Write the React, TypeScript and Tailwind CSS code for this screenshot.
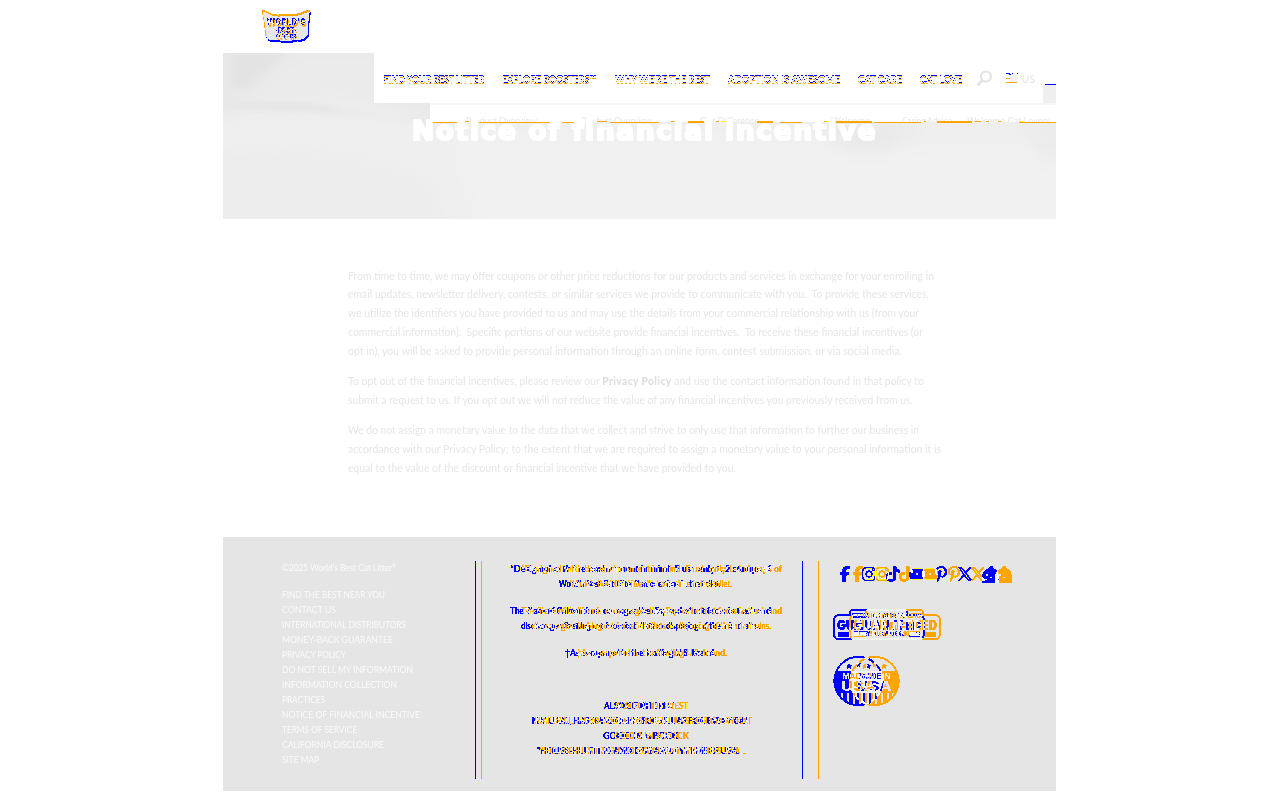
import React, { useLayoutEffect, useRef } from "react";
import { FaFacebookF, FaInstagram, FaTiktok, FaYoutube, FaPinterestP, FaXTwitter } from "react-icons/fa6";

/** One line of text, stretched or squeezed to a known width. */
function Fit({ w, children, className = "" }: { w: number; children: React.ReactNode; className?: string }) {
  const inner = useRef<HTMLSpanElement>(null);
  useLayoutEffect(() => {
    const el = inner.current;
    if (el && el.offsetWidth) el.style.transform = `scaleX(${w / el.getBoundingClientRect().width})`;
  }, [w]);
  return (
    <span className={`block whitespace-pre ${className}`} style={{ width: w }}>
      <span ref={inner} className="inline-block origin-left whitespace-pre">{children}</span>
    </span>
  );
}

/** Splits a shape into a first copy, a shifted copy and their overlap. */
function Split({ id, dx, dy, same, fringe = true }: { id: string; dx: number; dy: number; same: string; fringe?: boolean }) {
  return (
    <filter id={id} x="-60%" y="-60%" width="260%" height="220%" colorInterpolationFilters="sRGB">
      <feComponentTransfer in="SourceAlpha" result="a"><feFuncA type="discrete" tableValues="0 0 0 1 1 1 1 1 1 1" /></feComponentTransfer>
      <feComponentTransfer in="SourceAlpha" result="f"><feFuncA type="discrete" tableValues={fringe ? "0 0 1 0 0 0 0 0 0 0" : "0 0"} /></feComponentTransfer>
      <feOffset in="a" dx={dx} dy={dy} result="b" />
      <feOffset in="f" dx={dx} dy={dy} result="g" />
      <feFlood floodColor="#0000ff" result="blue" />
      <feFlood floodColor="#ffa500" result="orange" />
      <feFlood floodColor="#ffff00" result="yellow" />
      <feFlood floodColor={same} result="pale" />
      <feComposite in="blue" in2="a" operator="in" result="b1" />
      <feComposite in="b1" in2="b" operator="out" result="onlyA" />
      <feComposite in="orange" in2="b" operator="in" result="o1" />
      <feComposite in="o1" in2="a" operator="out" result="onlyB" />
      <feComposite in="a" in2="b" operator="in" result="ab" />
      <feComposite in="pale" in2="ab" operator="in" result="both" />
      <feComposite in="yellow" in2="f" operator="in" result="edgeA" />
      <feComposite in="yellow" in2="g" operator="in" result="edgeB" />
      <feMerge>
        <feMergeNode in="edgeA" />
        <feMergeNode in="edgeB" />
        <feMergeNode in="both" />
        <feMergeNode in="onlyB" />
        <feMergeNode in="onlyA" />
      </feMerge>
    </filter>
  );
}

const paragraphs: [number, React.ReactNode][][] = [
  [
    [586, "From time to time, we may offer coupons or other price reductions for our products and services in exchange for your enrolling in"],
    [581, "email updates, newsletter delivery, contests, or similar services we provide to communicate with you.  To provide these services,"],
    [571, "we utilize the identifiers you have provided to us and may use the details from your commercial relationship with us (from your"],
    [575, "commercial information).  Specific portions of our website provide financial incentives.  To receive these financial incentives (or"],
    [554, "opt in), you will be asked to provide personal information through an online form, contest submission, or via social media."],
  ],
  [
    [576, <>To opt out of the financial incentives, please review our <b className="text-[12px] leading-none tracking-[0.5px] font-black text-[#dedede]">Privacy Policy</b> and use the contact information found in that policy to</>],
    [565, "submit a request to us. If you opt out we will not reduce the value of any financial incentives you previously received from us."],
  ],
  [
    [571, "We do not assign a monetary value to the data that we collect and strive to only use that information to further our business in"],
    [593, "accordance with our Privacy Policy; to the extent that we are required to assign a monetary value to your personal information it is"],
    [388, "equal to the value of the discount or financial incentive that we have provided to you."],
  ],
];

const links: [number, string][] = [
  [103, "FIND THE BEST NEAR YOU"],
  [54, "CONTACT US"],
  [124, "INTERNATIONAL DISTRIBUTORS"],
  [111, "MONEY-BACK GUARANTEE"],
  [64, "PRIVACY POLICY"],
  [131, "DO NOT SELL MY INFORMATION"],
  [115, "INFORMATION COLLECTION"],
  [43, "PRACTICES"],
  [138, "NOTICE OF FINANCIAL INCENTIVE"],
  [75, "TERMS OF SERVICE"],
  [102, "CALIFORNIA DISCLOSURE"],
  [37, "SITE MAP"],
];

const nav: [number, string][] = [
  [100, "FIND YOUR BEST LITTER"],
  [94, "EXPLORE BOOSTERS™"],
  [95, "WHY WE'RE THE BEST"],
  [112, "ADOPTION IS AWESOME"],
  [44, "CAT CARE"],
  [42, "CAT LOVE"],
];

const dashes: [number, number][] = [
  [432, 28], [465, 4], [479, 72], [562, 14], [597, 10], [610, 49], [671, 8], [688, 16], [716, 3], [726, 4],
  [757, 16], [780, 22], [824, 2], [831, 41], [874, 47], [924, 2], [937, 35], [975, 6], [986, 3], [998, 3], [1019, 37],
];

function Logo() {
  return (
    <svg width="52" height="36" viewBox="0 0 52 36" className="[filter:url(#split-logo)]">
      <mask id="logo-cut">
        <rect width="52" height="36" fill="white" />
        <g fill="black" stroke="black" strokeWidth="0.2" fontFamily="Inter, sans-serif" fontWeight="900" textAnchor="middle">
          <text x="26" y="17" fontSize="8.8" textLength="39" lengthAdjust="spacingAndGlyphs">WORLD'S</text>
          <text x="26" y="24.5" fontSize="8" textLength="22" lengthAdjust="spacingAndGlyphs">-BEST-</text>
          <text x="26" y="30" fontSize="5" textLength="20" lengthAdjust="spacingAndGlyphs">CAT LITTER</text>
        </g>
      </mask>
      <path mask="url(#logo-cut)" d="M1.5 2.5 Q2 1.5 6 3 Q12 7.5 20 6.5 H34 Q41 5.5 46 2.5 Q50.5 0.5 49.5 4 Q47.5 14 48 23 Q47.5 31 40 31.5 Q34 30.5 30 33 H22 Q17 30.5 12 32 Q5 31 5 24 Q4.5 12 1.5 2.5Z" />
    </svg>
  );
}

function Storefront() {
  return (
    <svg width="18" height="17" viewBox="0 0 18 17">
      <path fillRule="evenodd" d="M1 17V9L3.5 5L8 2L9 0.5H12V2L16 4.5L17.5 9V17ZM5 8V10H7V8ZM9 11V12.5H11V11ZM4 13V14.5H6V13Z" />
    </svg>
  );
}

function Guarantee() {
  return (
    <svg width="94" height="32" viewBox="0 0 94 32" className="[filter:url(#split-badge)]">
      <path d="M17 6 V4 Q17 1 20 1 H71 Q74 1 74 4 V6 H85 Q91 6 91 12 V25 Q91 30.3 85 30.3 H7 Q1 30.3 1 25 V12 Q1 6 7 6Z" fill="none" stroke="black" strokeWidth="1.4" />
      <g fontFamily="Inter, sans-serif" fontWeight="800" textAnchor="middle">
        <text x="46" y="9" fontSize="6" textLength="54" lengthAdjust="spacingAndGlyphs">WORLD'S BEST CAT LITTER</text>
        <text x="46" y="21" fontSize="12.5" fontWeight="900" textLength="84" lengthAdjust="spacingAndGlyphs">GUARANTEED</text>
        <text x="46" y="27" fontSize="5.5" textLength="50" lengthAdjust="spacingAndGlyphs">MONEY-BACK PROMISE</text>
      </g>
      <path d="M5 23h12v4.5H5zM76 23h11v4.5H76z" />
    </svg>
  );
}

function MadeInUsa() {
  return (
    <svg width="52" height="52" viewBox="0 0 52 52" className="[filter:url(#split-badge)]">
      <mask id="usa-cut">
        <rect width="52" height="52" fill="white" />
        <g fill="black" fontFamily="Inter, sans-serif" fontWeight="900" textAnchor="middle">
          <text x="25.5" y="24" fontSize="7" textLength="32" lengthAdjust="spacingAndGlyphs">MADE IN</text>
          <text x="25.5" y="36" fontSize="13" textLength="35" lengthAdjust="spacingAndGlyphs">USA</text>
        </g>
        <path d="M9 38v14M15 38v14M21 38v14M27 38v14M33 38v14M39 38v14M44 38v14" stroke="black" strokeWidth="2" />
      </mask>
      <circle cx="25.5" cy="26" r="24.2" fill="none" stroke="black" strokeWidth="1.6" />
      <path mask="url(#usa-cut)" d="M3 16.5H48Q53 37 38 47Q26 53 14 47Q-2 38 3 16.5Z" />
      <g fontSize="8" textAnchor="middle" fontFamily="DejaVu Sans, sans-serif">
        <text x="16" y="14">★</text><text x="25.5" y="12">★</text><text x="35" y="14">★</text>
      </g>
    </svg>
  );
}

export default function App() {
  return (
    <div className="h-[800px] w-[1280px] overflow-hidden bg-white font-['Lato','Open_Sans',sans-serif]">
      <svg width="0" height="0" className="absolute">
        <Split id="split-nav" dx={0} dy={1} same="#f3f3f3" fringe={false} />
        <Split id="split-logo" dx={-1} dy={-2} same="#e7e7e7" fringe={false} />
        <Split id="split-text" dx={11} dy={0} same="#f3f3f3" />
        <Split id="split-wide" dx={3} dy={0} same="#f3f3f3" />
        <Split id="split-social" dx={13} dy={0} same="#ffffff" />
        <Split id="split-badge" dx={16} dy={0} same="#f4f4f4" fringe={false} />
      </svg>

      <div className="mx-auto w-[834px] pr-px">
        <header className="h-[53px] pl-[38px] pt-[10px]"><Logo /></header>

        <section className="relative h-[166px] overflow-hidden bg-[#efefef]">
          <svg className="absolute inset-0" width="833" height="166" viewBox="0 0 833 166">
            <defs>
              <filter id="soft"><feGaussianBlur stdDeviation="8" /></filter>
              <filter id="softer"><feGaussianBlur stdDeviation="3" /></filter>
            </defs>
            <g filter="url(#soft)">
              <path d="M-20 -20H220V70Q120 30 -20 65Z" fill="#e8e8e8" />
              <path d="M80 0H160V45L0 62Z" fill="#ebebeb" />
              <path d="M-20 100Q120 90 205 130L225 186H-20Z" fill="#ededed" />
              <path d="M230 85H560L620 100L853 90V186H260Z" fill="#f1f1f1" />
              <path d="M590 70H700L660 98L630 98Z" fill="#e9e9e9" />
              <path d="M790 60H853V115L815 105Z" fill="#ececec" />
            </g>
            <path d="M0 52Q70 46 110 55T210 68V71Q140 62 95 59T0 56Z" fill="#e4e4e4" filter="url(#softer)" />
            <path d="M10 0H62L25 34H8Z" fill="#e3e3e3" filter="url(#softer)" />
          </svg>

          <div className="absolute right-0 top-0 h-[31px] w-[13px] bg-white" />
          <div className="absolute right-0 top-[31px] h-px w-[11px] bg-[#0000ff]" />
          <nav className="absolute left-[151px] top-0 flex h-[50px] w-[669px] items-start bg-white pl-[10px] pt-[18px]">
            <div className="flex gap-[18.3px] [filter:url(#split-nav)]">
              {nav.map(([w, t]) => (
                <Fit key={t} w={w} className="text-[11.5px] font-bold leading-[15px] text-black">{t}</Fit>
              ))}
            </div>
            <svg className="ml-[14px] mt-[-1px]" width="17" height="17" viewBox="0 0 17 17" fill="none" stroke="#e3e3e3" strokeWidth="2.2">
              <circle cx="10" cy="6.5" r="5" /><path d="M6.4 10.2L1.5 15.2" strokeWidth="3" />
            </svg>
            <svg className="ml-[13px] mt-[2px]" width="13" height="11" viewBox="0 0 13 11" shapeRendering="crispEdges">
              <path d="M4 1h8v8H4z" fill="#f2f2f2" />
              <path d="M0 0h4v1H0zM6 0h1v1H6zM11 0h1v1h-1zM3 1h2v1H3z" fill="#0000ff" />
              <path d="M0 5h4v1H0zM0 9h11v1H0z" fill="#ffa500" />
            </svg>
            <span className="ml-[2px] mt-px text-[10.5px] leading-[15px] text-[#e6e6e6]">US</span>
          </nav>
          <div className="absolute left-[207px] right-0 top-[50px] h-[19px] overflow-hidden border-t-2 border-[#f6f6f6] bg-white">
            <div className="flex pl-[36px] pt-[9px] text-[10px] leading-[13px] text-[#e6e6e6]">
              <Fit w={71}>Product Overview</Fit>
              <Fit w={71} className="ml-[44px]">Product Overview</Fit>
              <Fit w={59} className="ml-[48px]">Our Difference</Fit>
              <Fit w={39} className="ml-[72px]">Welcome</Fit>
              <Fit w={50} className="ml-[32px]">Caring Advice</Fit>
              <Fit w={83} className="ml-[15px]">Welcome Cat Lovers</Fit>
            </div>
          </div>
          <svg className="absolute left-0 top-[68px]" width="833" height="2" viewBox="223 0 833 2" shapeRendering="crispEdges">
            {dashes.map(([x, w], i) => (
              <rect key={x} x={x} y={i % 3 === 1 ? 0 : w > 12 ? 0.5 : 0} width={w} height={w > 12 ? 1.5 : 1} fill="#ffa500" />
            ))}
            <path d="M721 0h4v1h-4zM826 0h3v1h-3zM1019 0h4v1h-4z" fill="#ffff00" />
          </svg>
          <h1 className="relative pl-[189px] pt-[60px] text-white">
            <Fit w={465} className="font-['DejaVu_Sans',sans-serif] text-[26px] font-bold leading-[36px] tracking-[1.5px] [-webkit-text-stroke:2px_white] [stroke-linejoin:round]">Notice of financial incentive</Fit>
          </h1>
        </section>

        <main className="flex h-[318px] flex-col gap-[11.5px] pl-[125px] pt-[47.6px] text-[12.3px] leading-[18.8px] text-[#e6e6e6]">
          {paragraphs.map((lines, i) => (
            <div key={i}>{lines.map(([w, t], j) => <Fit key={j} w={w}>{t}</Fit>)}</div>
          ))}
        </main>

        <footer className="flex h-[254px] bg-[#e5e5e5] pt-[24px]">
          <div className="w-[252px] pl-[59px] text-[9.3px] leading-[14.98px] text-[#fafafa]">
            <Fit w={114} className="mb-[12px]">©2025 World's Best Cat Litter<span className="align-[3px] text-[5px] leading-none">®</span></Fit>
            {links.map(([w, t]) => <Fit key={t} w={w}>{t}</Fit>)}
          </div>
          <div className="h-[218px] w-px bg-[#0000cc]" />
          <div className="ml-[5px] h-[218px] w-px bg-[#f5a623]" />
          <div className="flex h-[218px] w-[320px] flex-col items-center pr-[4px] text-[9.5px] font-bold leading-[15px] text-black">
            <div className="flex flex-col items-center [filter:url(#split-text)]">
              <Fit w={261}>*Designed with the environment in mind. Flush only 1-2 clumps of</Fit>
              <Fit w={162}>World's Best Cat Litter™ at one time in the toilet.</Fit>
              <Fit w={261} className="mt-[12px]">The State of California encourages the disposal of cat feces in trash and</Fit>
              <Fit w={239}>discourages flushing cat feces in toilets or disposing of them in drains.</Fit>
              <Fit w={151} className="mt-[12px]">†As compared to the leading U.S. brand.</Fit>
              <Fit w={73} className="mt-[38px]">ALSO OF INTEREST</Fit>
            </div>
            <Fit w={217} className="[filter:url(#split-wide)]">NATURAL, HARD-WORKING FORMULAS FOR EVERY CAT</Fit>
            <Fit w={75} className="[filter:url(#split-text)]">GOOD IN A ROCK</Fit>
            <Fit w={206} className="[filter:url(#split-wide)]">"HOUSE-HUNTING AND GIVEAWAY WINNERS USA...</Fit>
          </div>
          <div className="h-[218px] w-px bg-[#0000ff]" />
          <div className="ml-[15px] h-[218px] w-px bg-[#ffa500]" />
          <div className="pl-[14px]">
            <div className="flex h-[26px] items-center gap-[8px] pl-[4px] text-[16px] text-black [filter:url(#split-social)]">
              <FaFacebookF /><FaInstagram /><FaTiktok /><FaYoutube /><FaPinterestP /><FaXTwitter /><Storefront />
            </div>
            <div className="mt-[22px]"><Guarantee /></div>
            <div className="mt-[14px]"><MadeInUsa /></div>
          </div>
        </footer>
      </div>
    </div>
  );
}
